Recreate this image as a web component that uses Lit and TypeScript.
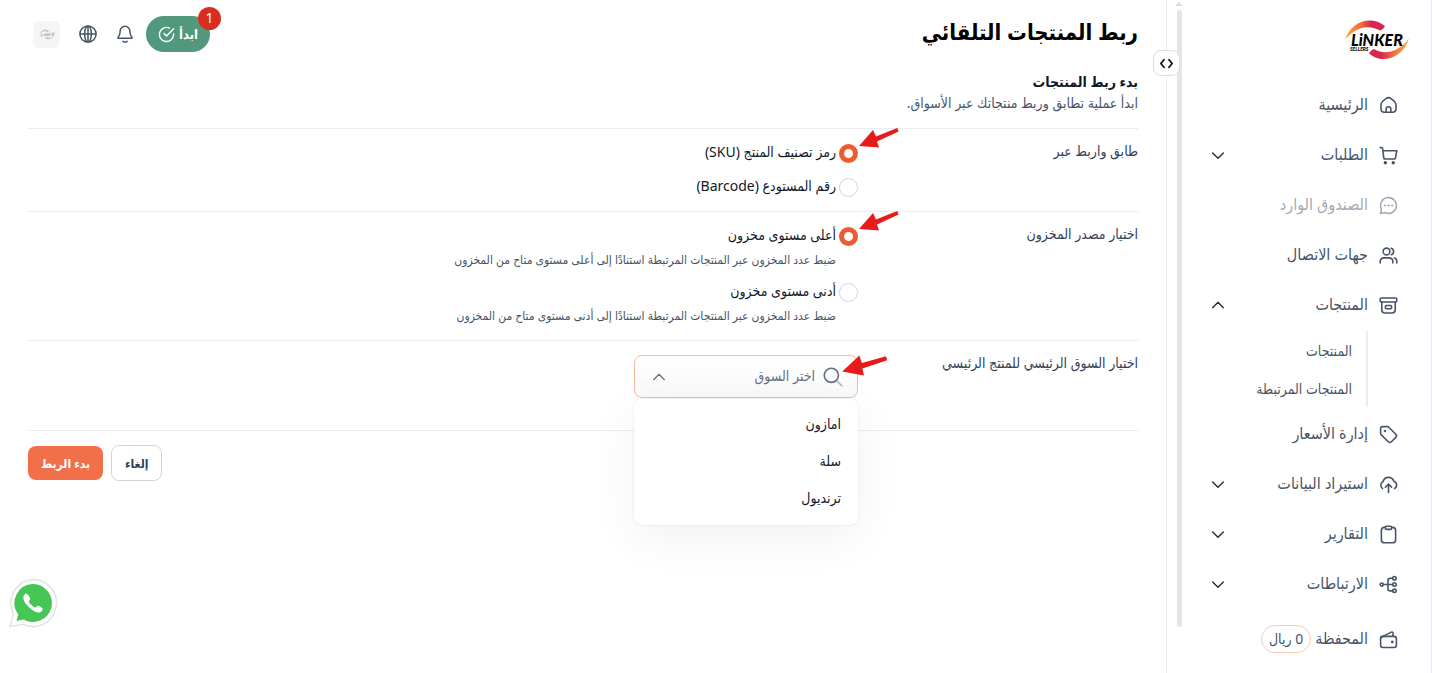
import { LitElement, html, css, svg, nothing } from "lit";
import { customElement, state } from "lit/decorators.js";
import { classMap } from "lit/directives/class-map.js";

const icons = {
  home: svg`<path d="M9 20.5v-4a3 3 0 0 1 6 0v4M2.5 11.5c0-2 .6-3.3 2-4.6l4-3.4c2.300-1.900 4.700-1.900 7 0l4 3.400c1.400 1.300 2 2.600 2 4.600v4.500c0 3-1.500 4.500-4.500 4.500H7c-3 0-4.500-1.500-4.500-4.500z"/>`,
  cart: svg`<path d="M1.500 2h1.600c.9 0 1.500.6 1.600 1.500L6 15c.1 1 .8 1.500 1.700 1.500H19c.9 0 1.600-.5 1.800-1.400L22.500 6H5"/><circle cx="8" cy="21.300" r="1.200" fill="currentColor"/><circle cx="18" cy="21.300" r="1.200" fill="currentColor"/>`,
  chat: svg`<path d="M12 2a10 10 0 1 1-4.600 18.900L2 22l1.100-5.400A10 10 0 0 1 12 2z"/><g fill="currentColor" stroke-width="1"><circle cx="7.500" cy="12" r=".9"/><circle cx="12" cy="12" r=".9"/><circle cx="16.500" cy="12" r=".9"/></g>`,
  users: svg`<circle cx="9.500" cy="7" r="4.300"/><path d="M1.500 21.500v-1.500c0-3 2-5 5-5h6c3 0 5 2 5 5v1.500M15.500 2.900a4.300 4.300 0 0 1 0 8.200M19.500 15.300c2 .6 3 2.400 3 4.700v1.500"/>`,
  archive: svg`<rect x="1.500" y="2.500" width="21" height="5" rx="1.500"/><path d="M3.500 7.500v10c0 3 1.200 4 4 4h9c2.800 0 4-1 4-4v-10"/><rect x="8" y="12" width="8" height="4" rx="1.500"/>`,
  tag: svg`<path d="M2 4.500v5.700c0 .9.300 1.600.9 2.200l8.800 8.800c1.200 1.200 2.800 1.200 4 0l5.500-5.500c1.200-1.200 1.200-2.800 0-4L12.400 2.900c-.6-.6-1.300-.9-2.200-.9H4.500A2.500 2.500 0 0 0 2 4.500z"/><circle cx="7.500" cy="7.500" r=".6" fill="currentColor"/>`,
  upload: svg`<path d="M4.500 17.200A5.300 5.300 0 0 1 5.200 8.200 7 7 0 0 1 18.700 8a5 5 0 0 1 .8 9.200M8 15.500l4-4 4 4M12 11.500V22"/>`,
  clipboard: svg`<rect x="3" y="3" width="18" height="19.500" rx="4"/><rect x="8" y="1.500" width="8" height="4" rx="1.500" fill="#fff"/>`,
  links: svg`<circle cx="3.500" cy="12" r="2"/><circle cx="19.500" cy="4" r="2.200"/><circle cx="19.500" cy="12" r="2.200"/><circle cx="19.500" cy="20" r="2.200"/><path d="M5.500 12h11.800M17.300 4h-3c-2 0-3 1-3 3v10c0 2 1 3 3 3h3"/>`,
  wallet: svg`<path d="M5 8 15.500 2.700c1.200-.6 2.200 0 2.200 1.300V8"/><rect x="2" y="8" width="20" height="14" rx="3"/><path d="M2 11c0-1.800 1-3 3-3"/><circle cx="16.800" cy="15" r=".8" fill="currentColor"/>`,
  bell: svg`<path d="M9.300 21.800c.7.700 1.700 1 2.700 1s2-.3 2.700-1M18.500 8.300a6.500 6.500 0 0 0-13 0c0 3.100-.8 5.200-1.700 6.600-1.200 1.200-1.500 1.900-1.400 2.100.1.500.4.700 1 .7h17.200c.6 0 .9-.2 1-.7.100-.2-.3-.9-1.400-2.100-.9-1.400-1.700-3.500-1.700-6.600z"/>`,
  globe: svg`<circle cx="12" cy="12" r="10.800"/><ellipse cx="12" cy="12" rx="4.500" ry="10.800"/><path d="M1.500 12h21M12 1.500v21"/>`,
  check: svg`<path d="M22 11v1a10 10 0 1 1-6-9.200M22 4 12 14l-3.500-3.500"/>`,
  search: svg`<circle cx="10" cy="10" r="8.500"/><path d="m16.500 16.500 6 6" opacity=".5"/>`,
  down: svg`<path d="m4 9 8 8 8-8"/>`,
  up: svg`<path d="m4 16 8-8 8 8"/>`,
  code: svg`<path d="M8 6 3 12l5 6M16 6l5 6-5 6"/>`,
};
type IconName = keyof typeof icons;

const icon = (name: IconName, cls = "icon") => svg`
  <svg class=${cls} viewBox="0 0 24 24" fill="none" stroke="currentColor" stroke-width="2"
    stroke-linecap="round" stroke-linejoin="round" aria-hidden="true">${icons[name]}</svg>`;

const swooshes = svg`
    <defs>
      <linearGradient id="arc-top" x1="0" x2="1">
        <stop offset="0" stop-color="#fbb040" /><stop offset=".4" stop-color="#f26b3a" /><stop offset=".65" stop-color="#d9264f" />
      </linearGradient>
      <linearGradient id="arc-bottom" x1="0" x2="1">
        <stop offset=".3" stop-color="#d9264f" /><stop offset=".6" stop-color="#f26b3a" /><stop offset="1" stop-color="#fbb040" />
      </linearGradient>
    </defs>
    <path fill="url(#arc-top)" d="M0 20C4 7 15 0 26 0.500c7 0.300 10 3 14 5.500-1 2-2.500 3.500-5 4.500C31 8 25 6.500 19 7.500 11 9 5 14 0 20z" />
    <path fill="url(#arc-bottom)" d="M64 18.500C60 32 49 39 38 39c-6 0-10-2.500-14-5.500 1-2 2.500-3.500 5-4.500 4 2.500 10 4.500 17 2.500C54 29 60 24 64 18.500z" />`;

const logo = html`
  <svg class="logo" viewBox="0 0 64 40" role="img" aria-label="Linker Sellers">
    ${swooshes}
    <text x="6" y="26" class="logo-main">LiNKER</text>
    <text x="5" y="31" class="logo-sub">SELLERS</text>
  </svg>`;

const miniLogo = html`
  <svg class="mini" viewBox="0 0 64 40" aria-hidden="true">
    ${swooshes}
    <path d="M8 26l3-12M8 26h7M19 26l2-9M24 26l3-11 5 11 3-11M38 26l3-12M48 14l-8 6 5 6M51 26l3-12h6l-1 6h-6l4 6" fill="none" stroke="#000" stroke-width="3" />
  </svg>`;

const arrow = () => html`
  <svg class="arrow" viewBox="0 0 40 20" aria-hidden="true">
    <path d="M38.200 0 17 8.500 14 2 0 18l20 1.500-2-6L39.600 3.500z" fill="#e81b1b" />
  </svg>`;

interface NavItem { label: string; icon: IconName; menu?: "open" | "closed"; muted?: boolean; chip?: string; children?: string[]; }

const nav: NavItem[] = [
  { label: "الرئيسية", icon: "home" },
  { label: "الطلبات", icon: "cart", menu: "closed" },
  { label: "الصندوق الوارد", icon: "chat", muted: true },
  { label: "جهات الاتصال", icon: "users" },
  { label: "المنتجات", icon: "archive", menu: "open", children: ["المنتجات", "المنتجات المرتبطة"] },
  { label: "إدارة الأسعار", icon: "tag" },
  { label: "استيراد البيانات", icon: "upload", menu: "closed" },
  { label: "التقارير", icon: "clipboard", menu: "closed" },
  { label: "الارتباطات", icon: "links", menu: "closed" },
  { label: "المحفظة", icon: "wallet", chip: "0 ريال" },
];

@customElement("app-sidebar")
class AppSidebar extends LitElement {
  static styles = css`
    :host { display: flex; position: relative; flex: none; width: 266px; box-sizing: border-box; border: solid #eaecf0; border-width: 0 1px; background: #fff; }
    .body { flex: 1; min-width: 0; padding-inline-start: 33px; padding-inline-end: 22px; }
    .brand { height: 80px; display: flex; align-items: center; margin-inline-start: -11px; }
    .logo { width: 64px; height: 40px; overflow: visible; direction: ltr; }
    .logo-main { font: italic 900 16px Lato, sans-serif; }
    .logo-sub { font: italic 900 5px Lato, sans-serif; }
    ul { list-style: none; margin: 0; padding: 0; }
    .row { display: flex; align-items: center; gap: 11px; width: 100%; height: 50px; padding: 0; border: 0; background: none; color: #475467; font: inherit; font-size: 16px; line-height: 24px; text-decoration: none; cursor: pointer; }
    .row span { padding-bottom: 2px; }
    .row.muted { color: #a3a9b6; }
    .row.wallet { height: 60px; gap: 4px; }
    .row.wallet .icon { margin-inline-end: 7px; }
    .icon { width: 19px; height: 19px; flex: none; }
    .chevron { width: 16px; height: 16px; margin-inline-start: auto; margin-inline-end: 1px; color: #1d2939; }
    .row .chip { border: 1px solid #fbc9b6; border-radius: 14px; padding: 0 7px; line-height: 26px; font-size: 14px; }
    .sub { margin: 1px 30px 2px 0; padding-inline-start: 14px; border-inline-start: 2px solid #eaecf0; }
    .sub a { display: flex; align-items: center; height: 38px; color: #475467; font-size: 14px; text-decoration: none; }
    .scroll { width: 16px; flex: none; display: flex; flex-direction: column; align-items: center; gap: 4px; padding-top: 2px; box-sizing: border-box; margin-inline-end: 4px; }
    .scroll::before { content: ""; border: 4px solid transparent; border-top: 0; border-bottom: 4px solid #dcdcdc; }
    .thumb { width: 5px; height: 92%; border-radius: 3px; background: #e5e5e5; }
    .toggle { position: absolute; top: 50px; inset-inline-end: -14px; width: 27px; height: 26px; padding: 0; display: grid; place-items: center; border: 1px solid #dcdee2; border-radius: 8px; background: #fff; color: #101828; }
    .toggle svg { width: 15px; height: 15px; stroke-width: 3; }
  `;
  render() {
    return html`
      <div class="body">
        <div class="brand">${logo}</div>
        <nav><ul>${nav.map((n) => html`<li>${this.row(n)}${n.children
          ? html`<ul class="sub">${n.children.map((c) => html`<li><a href="#">${c}</a></li>`)}</ul>` : nothing}</li>`)}</ul></nav>
      </div>
      <div class="scroll" aria-hidden="true"><div class="thumb"></div></div>
      <button class="toggle" aria-label="طي القائمة">${icon("code")}</button>`;
  }
  private row(n: NavItem) {
    const cls = classMap({ row: true, muted: !!n.muted, wallet: !!n.chip });
    const label = n.chip
      ? html`<span>${n.label}</span><span class="chip">${n.chip}</span>`
      : html`<span>${n.label}</span>`;
    return n.menu
      ? html`<button class=${cls} aria-expanded=${n.menu === "open"}>${icon(n.icon)}${label}${icon(n.menu === "open" ? "up" : "down", "chevron")}</button>`
      : html`<a class=${cls} href="#">${icon(n.icon)}${label}</a>`;
  }
}

@customElement("app-root")
class AppRoot extends LitElement {
  static styles = css`
    :host { display: flex; direction: rtl; min-height: 100vh; background: #fff; color: #101828; font-family: "Noto Sans", "DejaVu Sans Condensed", "DejaVu Sans", sans-serif; }
    main { flex: 1; min-width: 0; padding: 0 28px; }
    header { display: flex; align-items: center; justify-content: space-between; height: 68px; }
    h1 { margin: 0; padding-bottom: 6px; font-size: 22px; line-height: 32px; font-weight: 600; color: #000; }
    .tools { display: flex; align-items: center; gap: 19px; padding-inline-end: 5px; color: #475467; }
    .plain { border: 0; background: none; padding: 0; color: inherit; display: flex; }
    .icon { width: 18px; height: 18px; }
    .start { position: relative; display: flex; align-items: center; justify-content: center; gap: 4px; height: 36px; width: 64px; margin-inline-end: -7px; padding: 0; border: 0; border-radius: 18px; background: #52987e; color: #fff; font: inherit; font-size: 13px; font-weight: 600; }
    .start .icon { width: 17px; height: 17px; }
    .badge { position: absolute; top: -9px; right: -11px; width: 23px; height: 23px; border-radius: 50%; background: #d92d20; font-size: 14px; line-height: 22px; font-weight: 400; text-align: center; }
    .avatar { width: 27px; height: 27px; border-radius: 6px; background: #f5f5f5; align-items: center; justify-content: center; }
    .mini { width: 16px; height: 11px; filter: grayscale(1); opacity: .3; }
    .intro { padding: 4px 0 14px; border-bottom: 1px solid #eaecf0; }
    h2 { margin: 0; font-size: 14px; line-height: 20px; font-weight: 600; }
    .intro p { margin: 0; font-size: 14px; line-height: 22px; color: #475467; }
    .field { display: grid; grid-template-columns: minmax(160px, 280px) 1fr; padding: 12px 0 14px; border-bottom: 1px solid #eaecf0; }
    .name { font-size: 14px; line-height: 20px; color: #344054; }
    .choices { display: grid; gap: 14px; padding-top: 2px; }
    .choices.hinted { gap: 12px; }
    .choice { display: grid; grid-template-columns: 19px 1fr; column-gap: 3px; align-items: center; position: relative; font-size: 14px; line-height: 20px; }
    .choice label { justify-self: start; padding-bottom: 2px; line-height: 18px; }
    .choice p { grid-column: 2; margin: 4px 0 0; font-size: 12px; line-height: 20px; color: #475467; }
    input[type="radio"] { appearance: none; width: 19px; height: 19px; margin: 0; box-sizing: border-box; border: 1px solid #d0d5dd; border-radius: 50%; background: #fff; }
    input[type="radio"]:checked { border: 5px solid #ef5b30; }
    .arrow { position: absolute; width: 40px; height: 20px; right: -41px; top: -15px; pointer-events: none; }
    .combo { position: relative; width: 224px; height: 61px; padding-top: 2px; }
    .combo .arrow { width: 44px; height: 22px; right: -29px; top: 1px; transform: rotate(6deg); }
    .box { display: flex; align-items: center; gap: 8px; height: 43px; box-sizing: border-box; padding: 0 14px; border: 1px solid #f7b89f; border-radius: 8px; background: linear-gradient(#fff, #f9f9fb); color: #667085; }
    .box input { flex: 1; min-width: 0; border: 0; outline: 0; background: none; padding: 0 0 2px; font: inherit; font-size: 14px; color: #101828; }
    .box input::placeholder { color: #667085; opacity: 1; }
    .box .search { width: 20px; height: 20px; }
    .box .caret { width: 16px; height: 16px; margin-inline-end: 2px; }
    .list { position: absolute; top: 46px; right: 0; left: 0; z-index: 1; margin: 0; padding: 6px 0 9px; list-style: none; border-radius: 8px; background: #fff; box-shadow: 0 0 2px rgba(16, 24, 40, .12), 0 12px 48px rgba(16, 24, 40, .06); }
    .list li { padding: 0 17px; font-size: 14px; line-height: 37px; }
    .actions { display: flex; justify-content: flex-end; align-items: center; gap: 8px; padding-top: 14px; }
    .btn { height: 36px; padding: 0 13px; border: 1px solid #d0d5dd; border-radius: 8px; background: #fff; color: #344054; font: inherit; font-size: 12px; font-weight: 600; }
    .btn.primary { height: 34px; border: 0; background: #f1704a; color: #fff; }
    .whatsapp { position: fixed; left: 8px; bottom: 45px; width: 50px; height: 50px; }
    .whatsapp svg { display: block; width: 50px; height: 50px; }
  `;

  @state() private query = "";
  private markets = ["امازون", "سلة", "ترنديول"];

  private choice(group: string, id: string, label: string, checked: boolean, hint?: string) {
    return html`<div class="choice">
      <input type="radio" name=${group} id=${id} ?checked=${checked} />
      <label for=${id}>${label}</label>
      ${hint ? html`<p>${hint}</p>` : nothing}
      ${checked ? arrow() : nothing}
    </div>`;
  }

  render() {
    return html`
      <app-sidebar></app-sidebar>
      <main>
        <header>
          <h1>ربط المنتجات التلقائي</h1>
          <div class="tools">
            <button class="start"><span>ابدأ</span>${icon("check")}<span class="badge">1</span></button>
            <button class="plain" aria-label="الإشعارات">${icon("bell")}</button>
            <button class="plain" aria-label="اللغة">${icon("globe")}</button>
            <button class="plain avatar" aria-label="الحساب">${miniLogo}</button>
          </div>
        </header>
        <section class="intro">
          <h2>بدء ربط المنتجات</h2>
          <p>ابدأ عملية تطابق وربط منتجاتك عبر الأسواق.</p>
        </section>
        <form @submit=${(e: Event) => e.preventDefault()}>
          <div class="field" role="radiogroup" aria-labelledby="match">
            <span class="name" id="match">طابق واربط عبر</span>
            <div class="choices">
              ${this.choice("match", "sku", "رمز تصنيف المنتج (SKU)", true)}
              ${this.choice("match", "barcode", "رقم المستودع (Barcode)", false)}
            </div>
          </div>
          <div class="field" role="radiogroup" aria-labelledby="source">
            <span class="name" id="source">اختيار مصدر المخزون</span>
            <div class="choices hinted">
              ${this.choice("source", "highest", "أعلى مستوى مخزون", true, "ضبط عدد المخزون عبر المنتجات المرتبطة استنادًا إلى أعلى مستوى متاح من المخزون")}
              ${this.choice("source", "lowest", "أدنى مستوى مخزون", false, "ضبط عدد المخزون عبر المنتجات المرتبطة استنادًا إلى أدنى مستوى متاح من المخزون")}
            </div>
          </div>
          <div class="field">
            <label class="name" for="market">اختيار السوق الرئيسي للمنتج الرئيسي</label>
            <div class="combo">
              <div class="box">
                ${icon("search", "search")}
                <input id="market" type="text" role="combobox" aria-expanded="true" aria-controls="markets" autocomplete="off"
                  placeholder="اختر السوق" .value=${this.query} @input=${(e: Event) => (this.query = (e.target as HTMLInputElement).value)} />
                ${icon("up", "caret")}
              </div>
              <ul class="list" id="markets" role="listbox">
                ${this.markets.filter((m) => m.includes(this.query)).map((m) => html`<li role="option">${m}</li>`)}
              </ul>
              ${arrow()}
            </div>
          </div>
          <div class="actions">
            <button class="btn" type="button">إلغاء</button>
            <button class="btn primary" type="submit">بدء الربط</button>
          </div>
        </form>
      </main>
      <a class="whatsapp" href="#" aria-label="واتساب">
        <svg viewBox="0 0 50 50">
          <path d="M25 1.500a23.500 23.500 0 1 1-10 44.800L2 48.500 5.500 36A23.500 23.500 0 0 1 25 1.500z" fill="#fff" stroke="#dbe7e2" stroke-width="1.500" />
          <path d="M25 6a19 19 0 1 1-9.500 35.500L8.500 43l1.800-6.600A19 19 0 0 1 25 6z" fill="#45c655" />
          <path d="M19 16c-1-.6-2.500 0-3.200 1.500-1.500 3.500 1 7.500 4.700 11.300 4 4 8.500 6.800 11.700 5.400 1.800-.8 2.800-2.300 2.300-3.700-.3-.9-3.800-2.800-4.800-2.700-.9.100-1.700 1.800-2.600 1.800-1.500 0-6.300-4.500-6.400-6 0-.9 1.500-1.600 1.500-2.600 0-1.200-2-4.400-3.200-5z" fill="#fff" />
        </svg>
      </a>`;
  }
}
